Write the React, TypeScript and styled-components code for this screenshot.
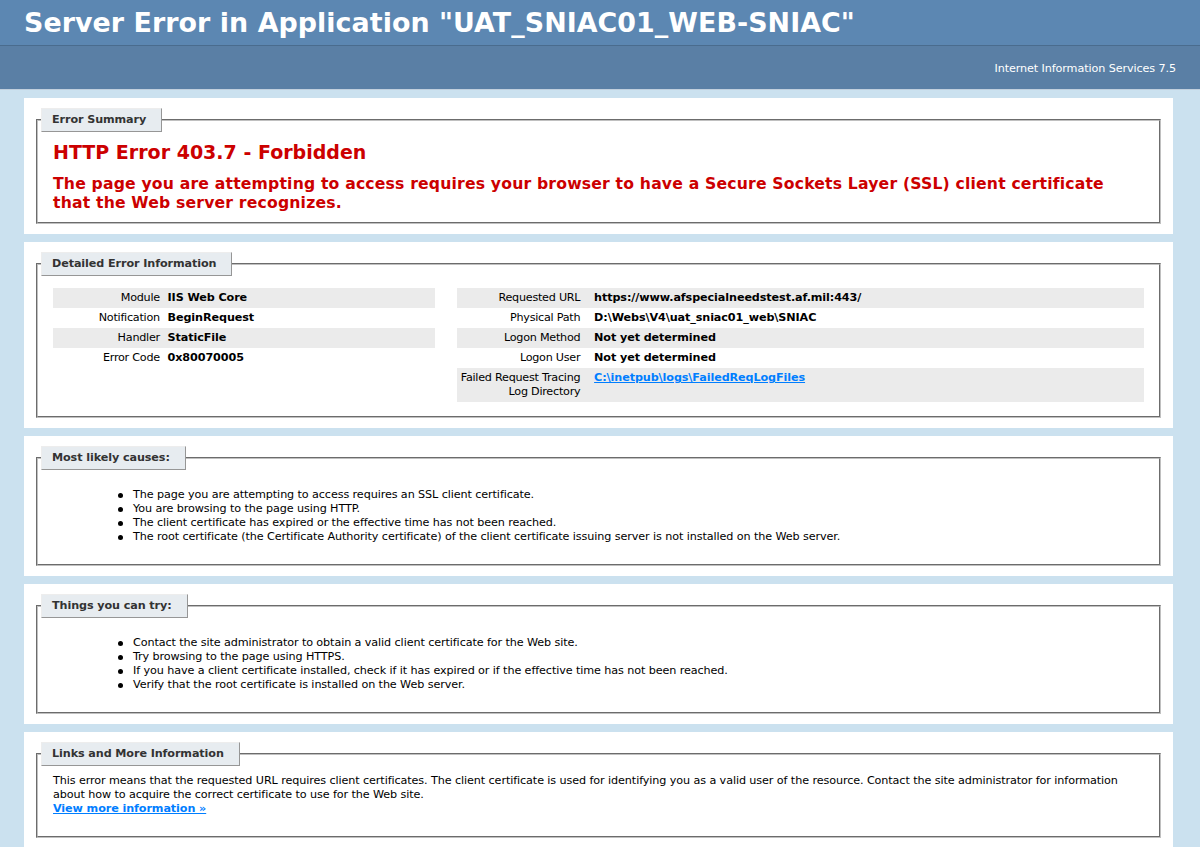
import styled, { createGlobalStyle } from "styled-components";

const GlobalStyle = createGlobalStyle`
  body {
    margin: 0;
    font-size: 0.7em;
    line-height: 14px;
    letter-spacing: -0.1px;
    font-family: "DejaVu Sans", Verdana, Arial, sans-serif;
    background: #cbe1ef;
  }
`;

const Header = styled.div`
  width: 96%;
  padding: 6px 2%;
  font-family: "DejaVu Sans", Verdana, sans-serif;
  color: #fff;
  background-color: #5c87b2;
`;

const Title = styled.h1`
  font-size: 2.4em;
  line-height: 33px;
  letter-spacing: 0.05px;
  margin: 0;
  color: #fff;
`;

const ServerVersion = styled.div`
  width: 96%;
  min-height: 1px;
  margin: 0 0 5px 0;
  padding: 11px 2% 8px 2%;
  background-color: #5a7fa5;
  border-bottom: 1px solid #c1cfdd;
  border-top: 1px solid #4a6c8e;
  font-size: 1em;
  color: #fff;
  text-align: right;

  p {
    margin: 5px 0;
  }
`;

const Content = styled.div`
  margin: 0 0 0 2%;
  position: relative;
`;

const Container = styled.div`
  background: #fff;
  width: 96%;
  margin-top: 8px;
  padding: 10px;
  position: relative;
`;

const Fieldset = styled.fieldset`
  padding: 0 15px 10px 15px;
  margin: 0 2px;
  border: 2px groove #c0c0c0;
`;

const Legend = styled.legend`
  color: #333333;
  padding: 4px 15px 4px 10px;
  margin: 4px 0 8px -12px;
  border-top: 1px solid #ededed;
  border-left: 1px solid #ededed;
  border-right: 1px solid #969696;
  border-bottom: 1px solid #969696;
  background: #e7ecf0;
  font-weight: bold;
  font-size: 1em;
`;

const ErrorTitle = styled.h2`
  font-size: 1.7em;
  line-height: 24px;
  letter-spacing: 0;
  margin: 0;
  color: #cc0000;
`;

const ErrorText = styled.h3`
  font-size: 1.4em;
  line-height: 19px;
  letter-spacing: 0.17px;
  margin: 10px 0 0 0;
  color: #cc0000;
`;

const Details = styled.div`
  display: flex;
  align-items: flex-start;
`;

const DetailsColumn = styled.div<{ $width: string; $gap?: string; $thWidth: string }>`
  width: ${(p) => p.$width};
  margin-right: ${(p) => p.$gap ?? "0"};
  overflow: hidden;

  th {
    width: ${(p) => p.$thWidth};
  }
`;

const Table = styled.table`
  margin: 4px 0;
  width: 100%;
  border: none;
  border-collapse: separate;
  border-spacing: 0;
  font-size: 1em;
`;

const Row = styled.tr<{ $alt?: boolean }>`
  th,
  td {
    vertical-align: top;
    padding: 3px 0;
    border: none;
    background-color: ${(p) => (p.$alt ? "#ebebeb" : "transparent")};
  }
  th {
    text-align: right;
    padding-right: 2%;
    font-weight: normal;
    letter-spacing: -0.25px;
  }
  td {
    text-align: left;
    font-weight: bold;
  }
`;

const NoWrap = styled.span`
  white-space: nowrap;
`;

const List = styled.ul`
  margin: 10px 0 10px 40px;
  list-style: none;
`;

const Item = styled.li`
  position: relative;

  &::before {
    content: "";
    position: absolute;
    left: -15px;
    top: 5px;
    width: 5px;
    height: 5px;
    border-radius: 50%;
    background: #000;
  }
`;

const Link = styled.a`
  color: #007eff;
  font-weight: bold;
`;

const Para = styled.p`
  margin: 0 0 10px 0;
`;

const leftRows: [string, string][] = [
  ["Module", "IIS Web Core"],
  ["Notification", "BeginRequest"],
  ["Handler", "StaticFile"],
  ["Error Code", "0x80070005"],
];

const rightRows: [string, string][] = [
  ["Requested URL", "https://www.afspecialneedstest.af.mil:443/"],
  ["Physical Path", "D:\\Webs\\V4\\uat_sniac01_web\\SNIAC"],
  ["Logon Method", "Not yet determined"],
  ["Logon User", "Not yet determined"],
];

const causes = [
  "The page you are attempting to access requires an SSL client certificate.",
  "You are browsing to the page using HTTP.",
  "The client certificate has expired or the effective time has not been reached.",
  "The root certificate (the Certificate Authority certificate) of the client certificate issuing server is not installed on the Web server.",
];

const tries = [
  "Contact the site administrator to obtain a valid client certificate for the Web site.",
  "Try browsing to the page using HTTPS.",
  "If you have a client certificate installed, check if it has expired or if the effective time has not been reached.",
  "Verify that the root certificate is installed on the Web server.",
];

function App() {
  return (
    <>
      <GlobalStyle />
      <Header>
        <Title>Server Error in Application "UAT_SNIAC01_WEB-SNIAC"</Title>
      </Header>
      <ServerVersion>
        <p>Internet Information Services 7.5</p>
      </ServerVersion>
      <Content>
        <Container>
          <Fieldset>
            <Legend>Error Summary</Legend>
            <ErrorTitle>HTTP Error 403.7 - Forbidden</ErrorTitle>
            <ErrorText>
              The page you are attempting to access requires your browser to
              have a Secure Sockets Layer (SSL) client certificate that the Web
              server recognizes.
            </ErrorText>
          </Fieldset>
        </Container>

        <Container>
          <Fieldset>
            <Legend>Detailed Error Information</Legend>
            <Details>
              <DetailsColumn $width="35%" $gap="2%" $thWidth="30%">
                <Table>
                  <tbody>
                    {leftRows.map(([k, v], i) => (
                      <Row key={k} $alt={i % 2 === 0}>
                        <th>{k}</th>
                        <td>{v}</td>
                      </Row>
                    ))}
                  </tbody>
                </Table>
              </DetailsColumn>
              <DetailsColumn $width="63%" $thWidth="20%">
                <Table>
                  <tbody>
                    {rightRows.map(([k, v], i) => (
                      <Row key={k} $alt={i % 2 === 0}>
                        <th>{k}</th>
                        <td>{v}</td>
                      </Row>
                    ))}
                    <Row $alt>
                      <th>
                        <NoWrap>Failed Request Tracing</NoWrap> Log Directory
                      </th>
                      <td>
                        <Link href="#">C:\inetpub\logs\FailedReqLogFiles</Link>
                      </td>
                    </Row>
                  </tbody>
                </Table>
              </DetailsColumn>
            </Details>
          </Fieldset>
        </Container>

        <Container>
          <Fieldset>
            <Legend>Most likely causes:</Legend>
            <List>
              {causes.map((c) => (
                <Item key={c}>{c}</Item>
              ))}
            </List>
          </Fieldset>
        </Container>

        <Container>
          <Fieldset>
            <Legend>Things you can try:</Legend>
            <List>
              {tries.map((t) => (
                <Item key={t}>{t}</Item>
              ))}
            </List>
          </Fieldset>
        </Container>

        <Container>
          <Fieldset>
            <Legend>Links and More Information</Legend>
            This error means that the requested URL requires client
            certificates. The client certificate is used for identifying you
            as a valid user of the resource. Contact the site administrator
            for information about how to acquire the correct certificate to
            use for the Web site.
            <Para>
              <Link href="#">View more information &raquo;</Link>
            </Para>
          </Fieldset>
        </Container>
      </Content>
    </>
  );
}

export default App;
